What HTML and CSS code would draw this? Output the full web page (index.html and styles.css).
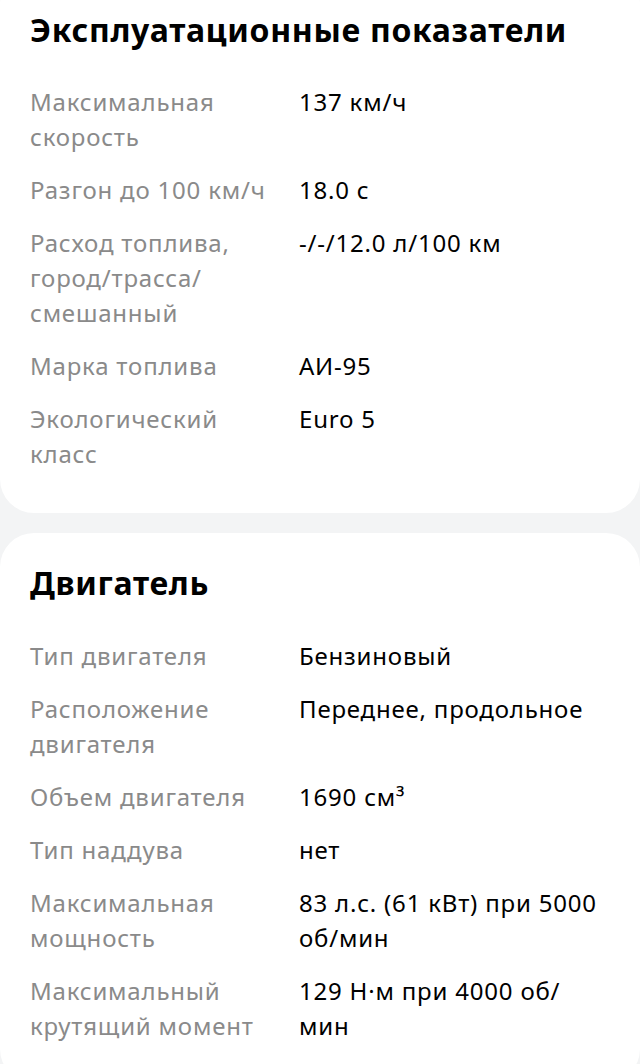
FILE: index.html
```html
<!DOCTYPE html>
<html lang="ru">
<head>
<meta charset="utf-8">
<link rel="stylesheet" href="styles.css">
</head>
<body>
<section class="card card-first">
  <h2 class="card-title">Эксплуатационные показатели</h2>
  <dl class="specs">
    <dt>Максимальная скорость</dt><dd>137 км/ч</dd>
    <dt>Разгон до 100 км/ч</dt><dd>18.0 с</dd>
    <dt>Расход топлива, город/<wbr>трасса/<wbr>смешанный</dt><dd>-/-/12.0 л/100 км</dd>
    <dt>Марка топлива</dt><dd>АИ-95</dd>
    <dt>Экологический класс</dt><dd>Euro 5</dd>
  </dl>
</section>
<section class="card card-second">
  <h2 class="card-title">Двигатель</h2>
  <dl class="specs">
    <dt>Тип двигателя</dt><dd>Бензиновый</dd>
    <dt>Расположение двигателя</dt><dd>Переднее, продольное</dd>
    <dt>Объем двигателя</dt><dd>1690 см³</dd>
    <dt>Тип наддува</dt><dd>нет</dd>
    <dt>Максимальная мощность</dt><dd>83 л.с. (61 кВт) при 5000 об/мин</dd>
    <dt>Максимальный крутящий момент</dt><dd>129 Н·м при 4000 об/<br>мин</dd>
  </dl>
</section>
</body>
</html>
```
FILE: styles.css
```css
html, body {
  margin: 0;
  padding: 0;
  background: #f3f4f5;
}
body {
  font-family: "Noto Sans", "Open Sans", sans-serif;
  color: #000;
  overflow: hidden;
}
.card {
  background: #fff;
  border-radius: 34px;
  padding: 30px 30px 40px;
  margin-bottom: 20px;
}
.card-first {
  margin-top: -30px;
  padding-top: 40px;
  padding-bottom: 42px;
}
.card-title {
  margin: 0 0 34px;
  font-size: 32px;
  line-height: 40px;
  font-weight: 700;
  letter-spacing: 0.7px;
}
.card-second .card-title {
  margin-bottom: 35px;
}
.specs {
  margin: 0;
  display: grid;
  grid-template-columns: 253px 1fr;
  column-gap: 16px;
  row-gap: 18px;
  font-size: 24px;
  line-height: 35px;
  letter-spacing: 0.8px;
}
.specs dt {
  color: #8a8a8a;
}
.specs dd {
  margin: 0;
  color: #000;
}
```
